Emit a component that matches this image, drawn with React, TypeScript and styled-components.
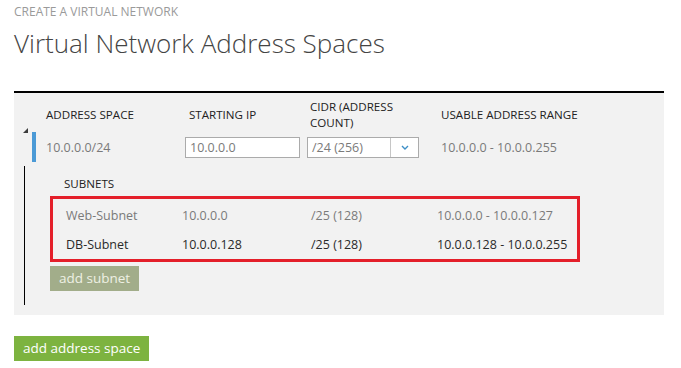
import React from "react";
import styled, { createGlobalStyle } from "styled-components";

const GlobalStyle = createGlobalStyle`
  body {
    margin: 0;
    background: #fff;
    font-family: "Open Sans", "Noto Sans", sans-serif;
  }
`;

const subnets = [
  { name: "Web-Subnet", ip: "10.0.0.0", cidr: "/25 (128)", range: "10.0.0.0 - 10.0.0.127", muted: true },
  { name: "DB-Subnet", ip: "10.0.0.128", cidr: "/25 (128)", range: "10.0.0.128 - 10.0.0.255", muted: false },
];

export default function App() {
  return (
    <>
      <GlobalStyle />
      <ScPage>
        <ScCaption>CREATE A VIRTUAL NETWORK</ScCaption>
        <ScTitle>Virtual Network Address Spaces</ScTitle>

        <ScPanel>
          <ScHeaderGrid>
            <ScHeader>ADDRESS SPACE</ScHeader>
            <ScHeader $indent={4}>STARTING IP</ScHeader>
            <ScHeader $indent={3}>
              CIDR (ADDRESS
              <br />
              COUNT)
            </ScHeader>
            <ScHeader>USABLE ADDRESS RANGE</ScHeader>
          </ScHeaderGrid>

          <ScAddressRow>
            <ScGutter>
              <ScToggle width="5" height="5" viewBox="0 0 5 5">
                <polygon points="5,0 5,5 0,5" fill="#3c3c3c" />
              </ScToggle>
              <ScSelectedBar />
            </ScGutter>
            <ScAddressGrid>
              <ScValue>10.0.0.0/24</ScValue>
              <ScInput>10.0.0.0</ScInput>
              <ScSelect>
                <ScSelectText>/24 (256)</ScSelectText>
                <ScSelectArrow>
                  <svg width="8" height="5" viewBox="0 0 8 5">
                    <path d="M1 1 L4 4 L7 1" fill="none" stroke="#3d8fc7" strokeWidth="1.4" />
                  </svg>
                </ScSelectArrow>
              </ScSelect>
              <ScValue>10.0.0.0 - 10.0.0.255</ScValue>
            </ScAddressGrid>
          </ScAddressRow>

          <ScSubnetBlock>
            <ScSubnetLabel>SUBNETS</ScSubnetLabel>
            <ScHighlight>
              {subnets.map((s) => (
                <ScSubnetRow key={s.name} $muted={s.muted}>
                  <span>{s.name}</span>
                  <span>{s.ip}</span>
                  <span>{s.cidr}</span>
                  <span>{s.range}</span>
                </ScSubnetRow>
              ))}
            </ScHighlight>
            <ScButton $tone="olive">add subnet</ScButton>
          </ScSubnetBlock>
        </ScPanel>

        <ScButton $tone="green" $top={21}>add address space</ScButton>
      </ScPage>
    </>
  );
}

const ScPage = styled.div`
  padding: 4px 14px 0;
  width: 650px;
`;

const ScCaption = styled.div`
  font-size: 12px;
  line-height: 15px;
  color: #9a9a9a;
`;

const ScTitle = styled.h1`
  margin: 4px 0 0;
  font-size: 26px;
  line-height: 40px;
  font-weight: 300;
  color: #444;
`;

const ScPanel = styled.div`
  margin-top: 28px;
  background: #f2f2f2;
  border-top: 2px solid #000;
  padding: 6px 0 10px;
`;

const ScHeaderGrid = styled.div`
  display: grid;
  grid-template-columns: 139px 122px 134px 1fr;
  margin-left: 32px;
  align-items: center;
  height: 32px;
`;

const ScHeader = styled.div<{ $indent?: number }>`
  font-size: 11.6px;
  line-height: 16px;
  color: #222;
  padding-left: ${(p) => p.$indent ?? 0}px;
`;

const ScAddressRow = styled.div`
  display: flex;
  margin-top: 1px;
  height: 30px;
`;

const ScGutter = styled.div`
  position: relative;
  width: 32px;
  flex: none;
`;

const ScToggle = styled.svg`
  position: absolute;
  left: 9px;
  top: -4px;
`;

const ScSelectedBar = styled.div`
  margin-left: 18px;
  width: 4px;
  height: 30px;
  background: #4b9ad6;
`;

const ScAddressGrid = styled.div`
  display: grid;
  grid-template-columns: 139px 122px 134px 1fr;
  align-items: center;
  flex: 1;
`;

const ScValue = styled.div`
  font-size: 12.5px;
  color: #7a7a7a;
`;

const ScInput = styled.div`
  box-sizing: border-box;
  width: 115px;
  height: 21px;
  border: 1px solid #ababab;
  background: #fff;
  padding-left: 4px;
  font-size: 12.5px;
  line-height: 19px;
  color: #7a7a7a;
`;

const ScSelect = styled.div`
  box-sizing: border-box;
  display: flex;
  width: 112px;
  height: 21px;
  border: 1px solid #ababab;
  background: #fff;
`;

const ScSelectText = styled.div`
  flex: 1;
  padding-left: 4px;
  font-size: 12.5px;
  line-height: 19px;
  color: #7a7a7a;
`;

const ScSelectArrow = styled.div`
  width: 27px;
  border-left: 1px solid #c6c6c6;
  display: flex;
  align-items: center;
  justify-content: center;
`;

const ScSubnetBlock = styled.div`
  margin: 4px 0 0 10px;
  border-left: 1px solid #000;
  padding: 10px 0 14px 25px;
`;

const ScSubnetLabel = styled.div`
  font-size: 11.6px;
  line-height: 16px;
  color: #222;
  padding-left: 14px;
`;

const ScHighlight = styled.div`
  margin-top: 4px;
  width: 524px;
  border: 3px solid #e41f2a;
  padding-top: 2px;
  height: 58px;
  box-sizing: content-box;
`;

const ScSubnetRow = styled.div<{ $muted: boolean }>`
  display: grid;
  grid-template-columns: 116px 129px 126px 1fr;
  align-items: center;
  height: 29px;
  padding-left: 13px;
  font-size: 12.5px;
  color: ${(p) => (p.$muted ? "#7a7a7a" : "#2a2a2a")};
`;

const ScButton = styled.div<{ $tone: "olive" | "green"; $top?: number }>`
  display: inline-block;
  margin-top: ${(p) => p.$top ?? 4}px;
  height: 25px;
  padding: 0 9px;
  font-size: 13.5px;
  line-height: 25px;
  color: ${(p) => (p.$tone === "olive" ? "#eef0e4" : "#fff")};
  background: ${(p) => (p.$tone === "olive" ? "#a2ad8a" : "#7db340")};
`;
